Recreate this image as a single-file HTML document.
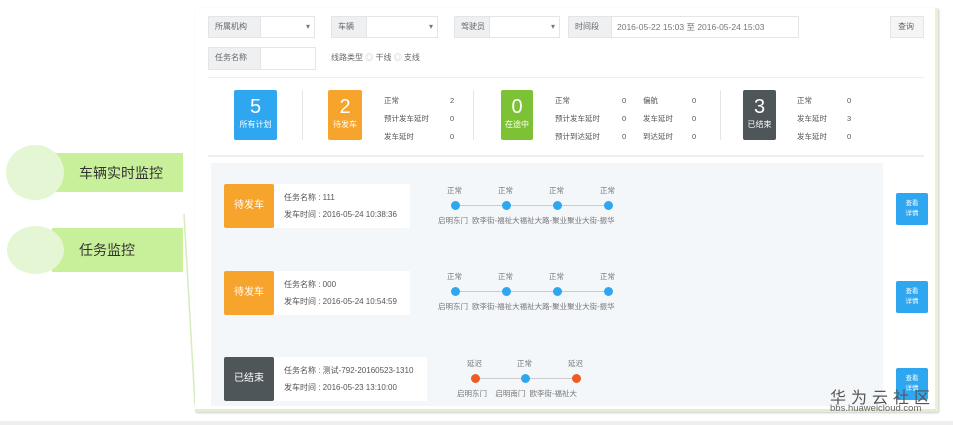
<!DOCTYPE html>
<html><head><meta charset="utf-8"><style>
*{margin:0;padding:0;box-sizing:border-box}
body{width:953px;height:425px;overflow:hidden;background:#fff;position:relative;font-family:"Liberation Sans","Noto Sans CJK SC",sans-serif;font-size:8px;color:#555}
.a{position:absolute}
.lb{position:absolute;background:#eef0f2;border:1px solid #e3e5e8;color:#666;font-size:8px;line-height:20px;padding-left:6px}
.in{position:absolute;background:#fff;border:1px solid #e3e5e8;color:#777;font-size:8px;line-height:20px;padding-left:5px}
.sb{position:absolute;color:#fff;text-align:center;border-radius:2px}
.sb b{display:block;font-size:20px;font-weight:normal;line-height:24px;margin-top:5px}
.sb i{display:block;font-style:normal;font-size:8px}
.t{position:absolute;font-size:7.5px;color:#555}
.vs{position:absolute;width:1px;background:#e6e6e6}
.st{position:absolute;width:50px;height:44px;color:#fff;font-size:10px;text-align:center;line-height:44px;border-radius:2px}
.info{position:absolute;background:#fff;width:136px;height:44px;font-size:8px;color:#555;padding:5px 0 0 10px;line-height:17px}
.dot{position:absolute;width:9px;height:9px;border-radius:50%;background:#2ea7f0}
.ln{position:absolute;height:1px;background:#ccc}
.btn{position:absolute;width:32px;height:32px;background:#2ea7f0;color:#fff;font-size:6.5px;text-align:center;line-height:10px;padding-top:6px;border-radius:2px}
</style></head><body>
<!-- left -->
<div class="a" style="left:55px;top:153px;width:128px;height:39px;background:#c8f09b"></div>
<div class="a" style="left:6px;top:145px;width:58px;height:55px;border-radius:50%;background:#e4f6d4"></div>
<div class="a" style="left:79px;top:163px;font-size:14px;color:#333">车辆实时监控</div>
<div class="a" style="left:52px;top:228px;width:131px;height:44px;background:#c8f09b"></div>
<div class="a" style="left:7px;top:226px;width:57px;height:48px;border-radius:50%;background:#e4f6d4"></div>
<div class="a" style="left:79px;top:240px;font-size:14px;color:#333">任务监控</div>
<svg class="a" style="left:180px;top:210px" width="20" height="200"><line x1="4" y1="4" x2="15" y2="195" stroke="#d6ecbf" stroke-width="1.5"/></svg>
<!-- panel -->
<div class="a" style="left:195px;top:8px;width:743px;height:404px;background:#fff;border-right:3px solid #e6f4d2;border-bottom:3px solid #dfeecb;box-shadow:1px 1px 2px #ccc"></div>
<div class="lb" style="left:208px;top:16px;width:53px;height:22px">所属机构</div><div class="in" style="left:260px;top:16px;width:55px;height:22px;text-align:right;padding-right:4px">▾</div>
<div class="lb" style="left:331px;top:16px;width:36px;height:22px">车辆</div><div class="in" style="left:366px;top:16px;width:72px;height:22px;text-align:right;padding-right:4px">▾</div>
<div class="lb" style="left:454px;top:16px;width:36px;height:22px">驾驶员</div><div class="in" style="left:489px;top:16px;width:71px;height:22px;text-align:right;padding-right:4px">▾</div>
<div class="lb" style="left:568px;top:16px;width:44px;height:22px">时间段</div><div class="in" style="left:611px;top:16px;width:188px;height:22px;font-size:8.5px">2016-05-22 15:03 至 2016-05-24 15:03</div>
<div class="lb" style="left:890px;top:16px;width:34px;height:22px;background:#f5f5f5;padding-left:7px">查询</div>
<div class="lb" style="left:208px;top:47px;width:53px;height:23px">任务名称</div><div class="in" style="left:260px;top:47px;width:56px;height:23px"></div>
<div class="a" style="left:331px;top:52px;font-size:8px;color:#666">线路类型 <span style="color:#bbb">◎</span> 干线 <span style="color:#bbb">◎</span> 支线</div>
<div class="a" style="left:208px;top:77px;width:716px;height:1px;background:#eee"></div>
<!-- stats -->
<div class="sb" style="left:234px;top:90px;width:43px;height:50px;background:#2ea7f0"><b>5</b><i>所有计划</i></div>
<div class="vs" style="left:302px;top:90px;height:50px"></div>
<div class="sb" style="left:328px;top:90px;width:34px;height:50px;background:#f7a42d"><b>2</b><i>待发车</i></div>
<div class="t" style="left:384px;top:92px;line-height:18px">正常<br>预计发车延时<br>发车延时</div>
<div class="t" style="left:450px;top:92px;line-height:18px">2<br>0<br>0</div>
<div class="vs" style="left:473px;top:90px;height:50px"></div>
<div class="sb" style="left:501px;top:90px;width:32px;height:50px;background:#7cc234"><b>0</b><i>在途中</i></div>
<div class="t" style="left:555px;top:92px;line-height:18px">正常<br>预计发车延时<br>预计到达延时</div>
<div class="t" style="left:622px;top:92px;line-height:18px">0<br>0<br>0</div>
<div class="t" style="left:643px;top:92px;line-height:18px">偏航<br>发车延时<br>到达延时</div>
<div class="t" style="left:692px;top:92px;line-height:18px">0<br>0<br>0</div>
<div class="vs" style="left:720px;top:90px;height:50px"></div>
<div class="sb" style="left:743px;top:90px;width:33px;height:50px;background:#4e5659"><b>3</b><i>已结束</i></div>
<div class="t" style="left:797px;top:92px;line-height:18px">正常<br>发车延时<br>发车延时</div>
<div class="t" style="left:847px;top:92px;line-height:18px">0<br>3<br>0</div>
<div class="a" style="left:208px;top:155px;width:716px;height:2px;background:#eee"></div>
<!-- list -->
<div class="a" style="left:211px;top:163px;width:672px;height:243px;background:#f4f7fa"></div>
<div class="st" style="left:224px;top:184px;background:#f7a42d">待发车</div>
<div class="info" style="left:274px;top:184px">任务名称 : 111<br>发车时间 : 2016-05-24 10:38:36</div>
<div class="st" style="left:224px;top:271px;background:#f7a42d">待发车</div>
<div class="info" style="left:274px;top:271px">任务名称 : 000<br>发车时间 : 2016-05-24 10:54:59</div>
<div class="st" style="left:224px;top:357px;background:#4e5659">已结束</div>
<div class="info" style="left:274px;top:357px;width:153px">任务名称 : 测试-792-20160523-1310<br>发车时间 : 2016-05-23 13:10:00</div>
<!-- timelines -->
<div class="ln" style="left:455px;top:205px;width:153px"></div>
<div class="dot" style="left:451px;top:201px"></div><div class="dot" style="left:502px;top:201px"></div><div class="dot" style="left:553px;top:201px"></div><div class="dot" style="left:604px;top:201px"></div>
<div class="t" style="left:447px;top:185px;color:#777">正常</div><div class="t" style="left:498px;top:185px;color:#777">正常</div><div class="t" style="left:549px;top:185px;color:#777">正常</div><div class="t" style="left:600px;top:185px;color:#777">正常</div>
<div class="t" style="left:438px;top:215px;color:#777;white-space:nowrap">启明东门&nbsp; 欧李街-福祉大福祉大路-聚业聚业大街-振华</div>
<div class="ln" style="left:455px;top:291px;width:153px"></div>
<div class="dot" style="left:451px;top:287px"></div><div class="dot" style="left:502px;top:287px"></div><div class="dot" style="left:553px;top:287px"></div><div class="dot" style="left:604px;top:287px"></div>
<div class="t" style="left:447px;top:271px;color:#777">正常</div><div class="t" style="left:498px;top:271px;color:#777">正常</div><div class="t" style="left:549px;top:271px;color:#777">正常</div><div class="t" style="left:600px;top:271px;color:#777">正常</div>
<div class="t" style="left:438px;top:301px;color:#777;white-space:nowrap">启明东门&nbsp; 欧李街-福祉大福祉大路-聚业聚业大街-振华</div>
<div class="ln" style="left:475px;top:378px;width:101px"></div>
<div class="dot" style="left:471px;top:374px;background:#f05a23"></div><div class="dot" style="left:521px;top:374px"></div><div class="dot" style="left:572px;top:374px;background:#f05a23"></div>
<div class="t" style="left:467px;top:358px;color:#777">延迟</div><div class="t" style="left:517px;top:358px;color:#777">正常</div><div class="t" style="left:568px;top:358px;color:#777">延迟</div>
<div class="t" style="left:457px;top:388px;color:#777;white-space:nowrap">启明东门&nbsp;&nbsp;&nbsp; 启明南门&nbsp; 欧李街-福祉大</div>
<div class="btn" style="left:896px;top:193px">查看<br>详情</div>
<div class="btn" style="left:896px;top:281px">查看<br>详情</div>
<div class="btn" style="left:896px;top:368px">查看<br>详情</div>
<!-- bottom -->
<div class="a" style="left:0;top:421px;width:953px;height:4px;background:#eee"></div>
<div class="a" style="left:830px;top:384px;font-size:16px;color:#555;letter-spacing:5px">华为云社区</div>
<div class="a" style="left:830px;top:403px;font-size:9.5px;color:#666">bbs.huaweicloud.com</div>
</body></html>
